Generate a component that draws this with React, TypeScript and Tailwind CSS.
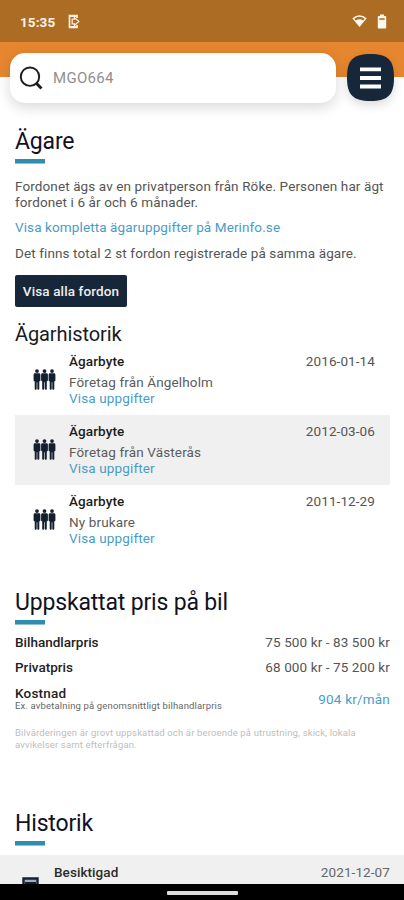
import React from "react";

function PersonFigure({ x }: { x: number }) {
  return (
    <g transform={`translate(${x} 0)`}>
      <circle cx="4" cy="2.1" r="1.9" />
      <path d="M1.900 4.200h4.200c.8 0 1.300.6 1.300 1.500v5.500c0 .8-.4 1.100-1.100 1.100v7.500c0 1.300-1.900 1.300-2 0v-6.500h-.6v6.500c-.1 1.300-2 1.300-2 0v-7.500c-.7 0-1.100-.3-1.100-1.100V5.700c0-.9.500-1.500 1.300-1.500z" />
    </g>
  );
}

function PeopleIcon() {
  return (
    <svg className="ml-[18px] mt-[24px] h-[21px] w-[23px] shrink-0 fill-[#14202f]" viewBox="0 0 23 21">
      <PersonFigure x={0} />
      <PersonFigure x={7.5} />
      <PersonFigure x={15} />
    </svg>
  );
}

function StatusBar() {
  return (
    <div className="flex h-[42px] shrink-0 items-start bg-[#ac6c24] pl-[20px] pr-[17px] pt-[14px] text-white">
      <span className="w-[36px] whitespace-nowrap text-[13.5px] font-bold leading-[17px] tracking-[0.1px] text-[#fdf3e8]">15:35</span>
      <svg className="ml-[12px] h-[15px] w-[12px]" viewBox="0 0 12 15" fill="none" stroke="#fdeedd">
        <path d="M9 4V1.500H1.500v12H9V11" strokeWidth="1.700" />
        <path d="M1 2h8.500M1 13h8.500" strokeWidth="2.200" />
        <path d="M4.200 5.200v4.600h2.300v1.600l4.300-3.900-4.300-3.900v1.600Z" strokeWidth="1.300" />
      </svg>
      <span className="flex-1" />
      <svg className="mt-[1px] h-[12px] w-[15px]" viewBox="0 0 15 12">
        <path d="M7.500 11.900 0.300 3.200Q7.500-2.600 14.700 3.200Z" fill="#fff8ee" />
        <path d="M2.300 3.700Q7.500 0 12.700 3.700L11.300 5.500Q7.500 2.800 3.700 5.500Z" fill="#ac6c24" />
      </svg>
      <svg className="ml-[10px] h-[15px] w-[10px]" viewBox="0 0 10 15">
        <path d="M3 .4h4v1.500h1.300c.5 0 .9.400.9.900v10.700c0 .5-.4.900-.9.900H1.700c-.5 0-.9-.4-.9-.9V2.800c0-.5.4-.9.9-.9H3Z" fill="#fff8ee" />
        <path d="M2.300 4h5.400v2H2.300Z" fill="#c28a4e" />
      </svg>
    </div>
  );
}

function SearchHeader() {
  return (
    <header className="flex h-[75px] shrink-0 items-start justify-between bg-[linear-gradient(#e6872f_35px,#ffffff_35px)] pl-[10px] pr-[10px] pt-[11px]">
      <div className="flex h-[50px] w-[326px] items-center rounded-[15px] bg-white pl-[9px] shadow-[0_4px_14px_rgba(0,0,0,0.16)]">
        <svg className="h-[24px] w-[24px]" viewBox="0 0 24 24" fill="none" stroke="#1c1c1e">
          <circle cx="11" cy="10.700" r="9.200" strokeWidth="1.900" />
          <path d="m17.300 17.300 5.200 5.200" strokeWidth="3" />
        </svg>
        <span className="ml-[10px] text-[15px] leading-[20px] tracking-[0.3px] text-[#909090]">MGO664</span>
      </div>
      <button className="mt-px h-[47px] w-[47px] drop-shadow-[0_4px_5px_rgba(0,0,0,0.14)]" aria-label="Meny">
        <svg className="h-[47px] w-[47px]" viewBox="0 0 47 47">
          <path d="M23.500 0C41 0 47 6 47 23.500S41 47 23.500 47 0 41 0 23.500 6 0 23.500 0Z" fill="#17273a" />
          <path d="M13 15.300h21M13 24h21M13 32.500h21" stroke="#fff" strokeWidth="3.800" />
        </svg>
      </button>
    </header>
  );
}

function SectionHeading({ children }: { children: React.ReactNode }) {
  return (
    <div className="h-[37px]">
      <h2 className="h-[32px] whitespace-nowrap pt-px text-[23px] leading-[28px] tracking-[-0.17px] text-[#11121f]">{children}</h2>
      <div className="h-[5px] w-[30px] border-b border-[#8fc0d4] bg-[#308db0]" />
    </div>
  );
}

type Change = { date: string; owner: string; shade: string };

const changes: Change[] = [
  { date: "2016-01-14", owner: "Företag från Ängelholm", shade: "" },
  { date: "2012-03-06", owner: "Företag från Västerås", shade: "bg-[#f0f0f0]" },
  { date: "2011-12-29", owner: "Ny brukare", shade: "" },
];

function OwnerRow({ change }: { change: Change }) {
  return (
    <li className={`flex h-[70px] pr-[15px] ${change.shade}`}>
      <PeopleIcon />
      <div className="ml-[13px] flex-1 whitespace-nowrap pt-[8px] text-[13.5px] leading-[16px]">
        <p className="h-[21px] font-medium tracking-[0.1px] text-[#1c1c1c]">Ägarbyte</p>
        <p className="tracking-[0.14px] text-[#5c5c5c]">{change.owner}</p>
        <p className="tracking-[0.14px] text-[#4a9cc7]">Visa uppgifter</p>
      </div>
      <time className="pt-[8px] text-[13.5px] leading-[16px] tracking-[0.1px] text-[#555555]">{change.date}</time>
    </li>
  );
}

export default function App() {
  return (
    <div className="flex h-[900px] w-[404px] flex-col overflow-hidden bg-white font-[Roboto,sans-serif]">
      <StatusBar />
      <SearchHeader />
      <main className="flex h-[767px] shrink-0 flex-col overflow-hidden pl-[15px] pr-[14px] pt-[10px]">
        <SectionHeading>Ägare</SectionHeading>
        <div className="mt-[14px] whitespace-nowrap text-[13.5px] leading-[16px] tracking-[0.11px] text-[#555555]">
          <p>Fordonet ägs av en privatperson från Röke. Personen har ägt<br />fordonet i 6 år och 6 månader.</p>
          <p className="mt-[9px] text-[#4a9cc7]">Visa kompletta ägaruppgifter på Merinfo.se</p>
          <p className="mt-[10px]">Det finns total 2 st fordon registrerade på samma ägare.</p>
        </div>
        <button className="mt-[14px] h-[32px] w-[112px] shrink-0 whitespace-nowrap rounded-[2px] bg-[#17273a] pt-px text-[13.5px] font-medium tracking-[0.12px] text-[#eeeeee]">Visa alla fordon</button>
        <h3 className="mt-[15px] h-[23px] shrink-0 whitespace-nowrap text-[20px] leading-[24px] tracking-[-0.1px] text-[#1a1a24]">Ägarhistorik</h3>
        <ul className="shrink-0">
          {changes.map((c) => <OwnerRow key={c.date} change={c} />)}
        </ul>
        <div className="mt-[33px] shrink-0">
          <SectionHeading>Uppskattat pris på bil</SectionHeading>
        </div>
        <div className="mt-[9px] shrink-0 whitespace-nowrap text-[13.5px] leading-[16px]">
          <div className="flex h-[25px] justify-between">
            <span className="font-medium text-[#222222]">Bilhandlarpris</span>
            <span className="tracking-[0.1px] text-[#555555]">75 500 kr - 83 500 kr</span>
          </div>
          <div className="flex h-[26px] justify-between">
            <span className="font-medium text-[#222222]">Privatpris</span>
            <span className="tracking-[0.1px] text-[#555555]">68 000 kr - 75 200 kr</span>
          </div>
          <div className="flex h-[42px] justify-between">
            <div>
              <p className="font-medium tracking-[0.2px] text-[#222222]">Kostnad</p>
              <p className="text-[9.5px] leading-[10px] tracking-[0.15px] text-[#666666]">Ex. avbetalning på genomsnittligt bilhandlarpris</p>
            </div>
            <span className="pt-[6px] tracking-[0.2px] text-[#4a9cc7]">904 kr/mån</span>
          </div>
          <p className="text-[9.5px] leading-[12px] tracking-[0.15px] text-[#bdbdbd]">Bilvärderingen är grovt uppskattad och är beroende på utrustning, skick, lokala<br />avvikelser samt efterfrågan.</p>
        </div>
        <div className="mt-[58px] shrink-0">
          <SectionHeading>Historik</SectionHeading>
        </div>
        <div className="-ml-[15px] -mr-[14px] mt-[9px] flex h-[40px] shrink-0 items-start bg-[#f0f0f0] pl-[22px] pr-[14px] pt-[9px] text-[13.5px] leading-[16px]">
          <svg className="mt-[13px] h-[20px] w-[17px]" viewBox="0 0 17 20">
            <path d="M1.500 20V1.500h14V20" fill="#a9adba" stroke="#14202f" strokeWidth="2.400" />
            <path d="M3 6h11" stroke="#14202f" strokeWidth="2" />
          </svg>
          <span className="ml-[15px] flex-1 font-medium tracking-[0.07px] text-[#2b2b2b]">Besiktigad</span>
          <time className="tracking-[0.1px] text-[#666666]">2021-12-07</time>
        </div>
      </main>
      <footer className="flex h-[16px] shrink-0 justify-center bg-black pt-[7px]">
        <div className="h-[4px] w-[71px] rounded-[1px] bg-[#dddddd]" />
      </footer>
    </div>
  );
}
